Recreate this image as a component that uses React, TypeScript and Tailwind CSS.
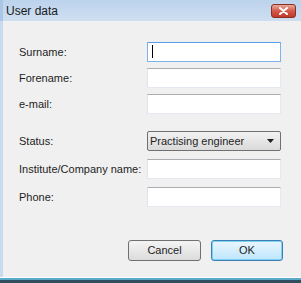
import React from 'react';

const font = { fontFamily: '"Liberation Sans", Arial, sans-serif' };

function TextBox({ focused = false }: { focused?: boolean }) {
  return (
    <div
      className={`relative h-[20px] w-[134px] bg-white border ${
        focused
          ? 'border-[#7eb4ea] border-t-[#569de5]'
          : 'border-[#e3e9ef] border-t-[#abadb3] border-l-[#e2e3ea]'
      }`}
    >
      {focused && <div className="absolute left-[4px] top-[2px] h-[13px] w-[1px] bg-black" />}
    </div>
  );
}

function Row({ label, children, className = '' }: { label: string; children: React.ReactNode; className?: string }) {
  return (
    <div className={`flex items-center ${className}`}>
      <div className="w-[128px] text-[11px] text-[#1e1e1e]">{label}</div>
      {children}
    </div>
  );
}

export default function App() {
  return (
    <div className="w-[301px] h-[283px] overflow-hidden flex flex-col bg-[#f0f0f0]" style={font}>
      {/* Title bar */}
      <div className="h-[21px] shrink-0 flex items-center justify-between pl-[6px] pr-[5px] bg-gradient-to-b from-[#bcd3ec] to-[#cfdff1] border-l-[3px] border-[#a9c6e6]">
        <span className="text-[12px] text-[#1a1a1a] leading-none -ml-[3px] mt-[1px]">User data</span>
        <div className="w-[25px] h-[14px] rounded-[3px] border border-[#8a2f24] bg-gradient-to-b from-[#e9a99b] via-[#d3594a] to-[#c0392b] flex items-center justify-center">
          <svg width="9" height="8" viewBox="0 0 9 8">
            <path d="M1 1 L8 7 M8 1 L1 7" stroke="white" strokeWidth="2" strokeLinecap="round" />
          </svg>
        </div>
      </div>

      {/* Body */}
      <div className="flex-1 flex border-l-[3px] border-[#c9dcef]">
        <div className="flex-1 flex flex-col pl-[16px] pt-[21px]">
          <Row label="Surname:">
            <TextBox focused />
          </Row>
          <Row label="Forename:" className="mt-[6px]">
            <TextBox />
          </Row>
          <Row label="e-mail:" className="mt-[6px]">
            <TextBox />
          </Row>
          <Row label="Status:" className="mt-[17px]">
            <div className="h-[20px] w-[134px] rounded-[2px] border border-[#707070] bg-gradient-to-b from-[#f2f2f2] to-[#dadada] flex items-center justify-between pl-[2px] pr-[6px]">
              <span className="text-[11px] text-[#1e1e1e]">Practising engineer</span>
              <svg width="7" height="4" viewBox="0 0 7 4">
                <path d="M0 0 H7 L3.5 4 Z" fill="#1e1e1e" />
              </svg>
            </div>
          </Row>
          <Row label="Institute/Company name:" className="mt-[8px]">
            <TextBox />
          </Row>
          <Row label="Phone:" className="mt-[8px]">
            <TextBox />
          </Row>

          <div className="flex justify-end gap-[10px] pr-[18px] mt-[33px]">
            <button className="h-[21px] w-[73px] rounded-[3px] border border-[#707070] bg-gradient-to-b from-[#f4f4f4] to-[#dcdcdc] text-[11px] text-[#1e1e1e]">
              Cancel
            </button>
            <button className="h-[21px] w-[72px] rounded-[3px] border border-[#3c7fb1] bg-gradient-to-b from-[#eaf6fd] to-[#bee6fd] text-[11px] text-[#1e1e1e] shadow-[inset_0_0_0_1px_#7fd0f5]">
              OK
            </button>
          </div>
        </div>
      </div>

      {/* Bottom frame */}
      <div className="h-[6px] shrink-0 flex flex-col">
        <div className="h-[1px] bg-[#ffffff]" />
        <div className="h-[2px] bg-[#5aa9c9]" />
        <div className="flex-1 bg-[#2f4f5f]" />
      </div>
    </div>
  );
}
